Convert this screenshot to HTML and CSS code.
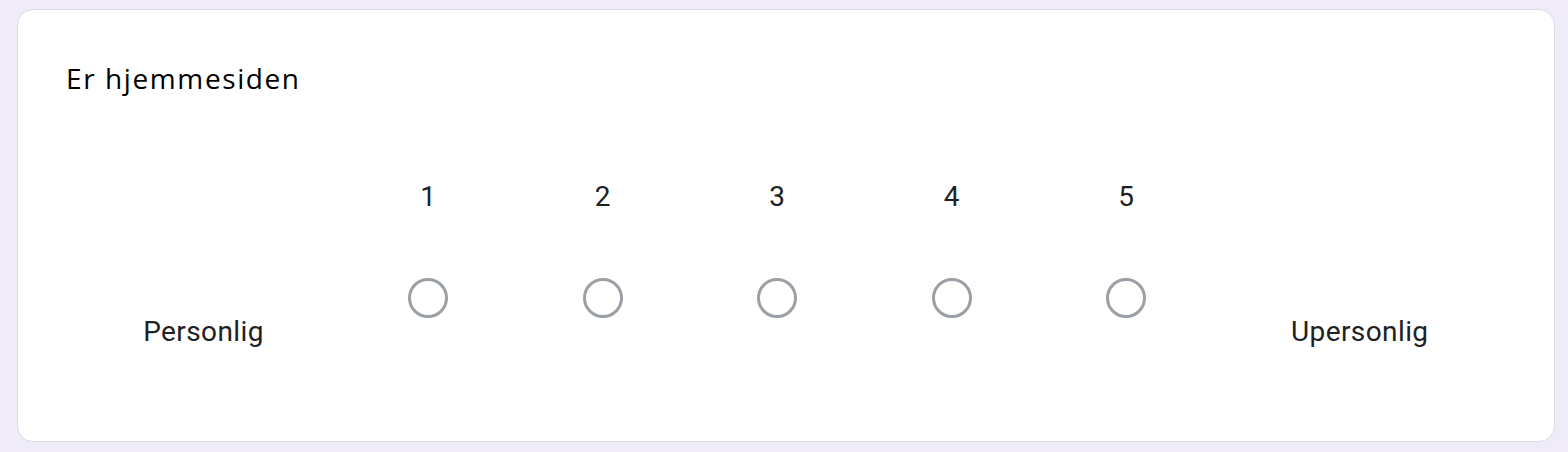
FILE: index.html
```html
<!DOCTYPE html>
<html lang="no">
<head>
<meta charset="utf-8">
<title>Er hjemmesiden</title>
<link rel="stylesheet" href="styles.css">
</head>
<body>
<div class="page">
  <div class="card">
    <div class="title">Er hjemmesiden</div>
    <div class="scale">
      <div class="label label-left">Personlig</div>
      <div class="option"><div class="num">1</div><div class="radio"></div></div>
      <div class="option"><div class="num">2</div><div class="radio"></div></div>
      <div class="option"><div class="num">3</div><div class="radio"></div></div>
      <div class="option"><div class="num">4</div><div class="radio"></div></div>
      <div class="option"><div class="num">5</div><div class="radio"></div></div>
      <div class="label label-right">Upersonlig</div>
    </div>
  </div>
</div>
</body>
</html>
```
FILE: styles.css
```css
html, body {
  margin: 0;
  padding: 0;
  background: #f0ebf8;
}
.page {
  padding: 9px 13px 10px 17px;
}
.card {
  background: #ffffff;
  border: 1px solid #dadce0;
  border-radius: 16px;
  padding: 48px 48px 89px 48px;
  box-sizing: border-box;
  height: 433px;
}
.title {
  font-family: "Open Sans", "Noto Sans", sans-serif;
  font-size: 28px;
  font-weight: 500;
  line-height: 40px;
  color: #000000;
  letter-spacing: 1.6px;
  margin-bottom: 75px;
}
.scale {
  display: flex;
  align-items: flex-end;
  font-family: Roboto, "Liberation Sans", sans-serif;
  font-size: 28px;
  letter-spacing: 0.4px;
  color: #202124;
}
.label {
  line-height: 40px;
  text-align: center;
}
.label-left {
  width: 275px;
}
.label-right {
  flex: 1;
}
.option {
  width: 174.5px;
  display: flex;
  flex-direction: column;
  align-items: center;
  padding-bottom: 34px;
}
.num {
  line-height: 48px;
  height: 48px;
}
.radio {
  margin-top: 57px;
  width: 40px;
  height: 40px;
  box-sizing: border-box;
  border: 3.5px solid #9aa0a6;
  border-radius: 50%;
}
```
